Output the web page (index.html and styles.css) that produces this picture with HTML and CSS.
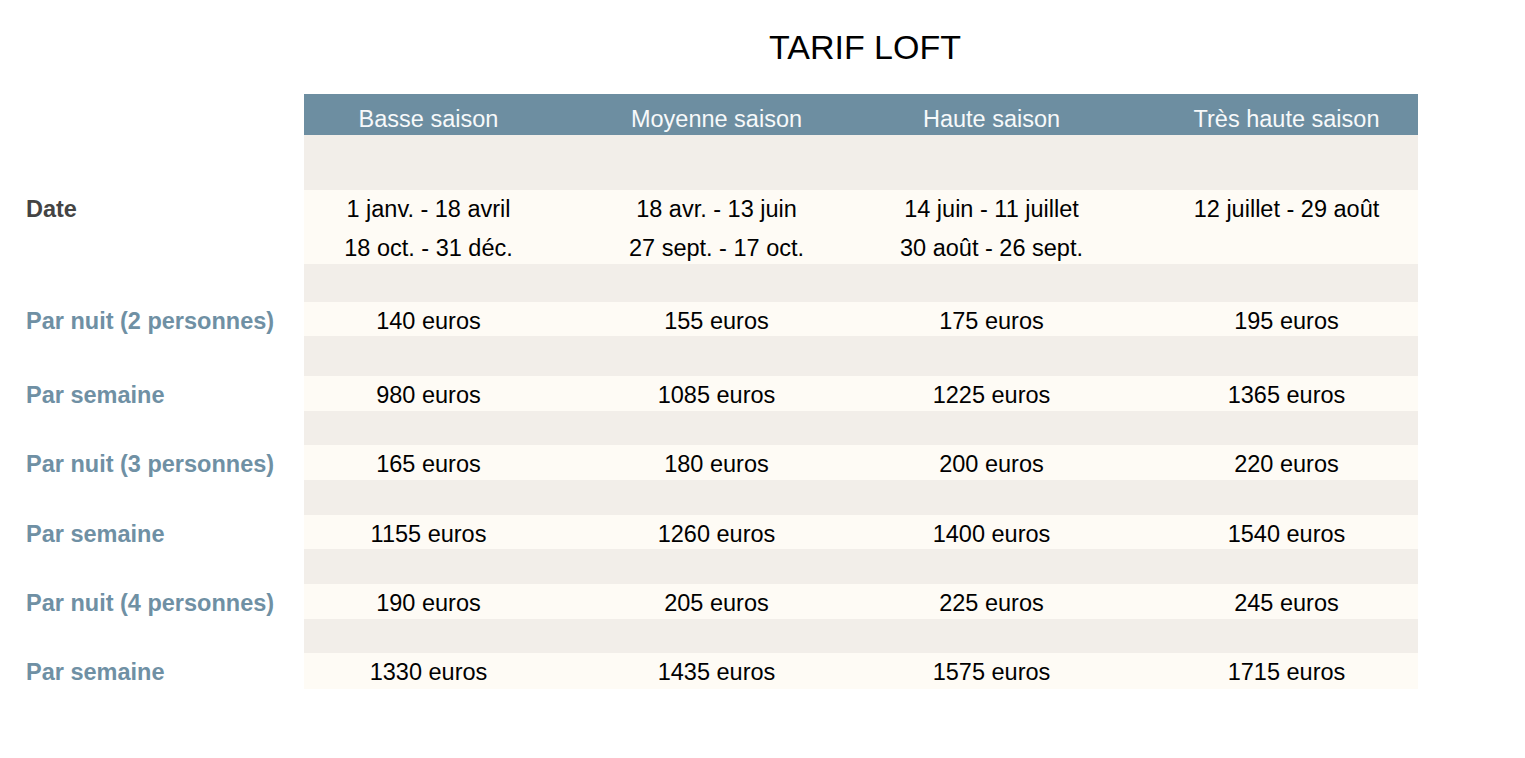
FILE: index.html
```html
<!DOCTYPE html>
<html lang="fr">
<head>
<meta charset="utf-8">
<title>Tarif Loft</title>
<link rel="stylesheet" href="styles.css">
</head>
<body>
<main class="page">
  <h1 class="title">TARIF LOFT</h1>
  <div class="tarifs">
    <div class="corner"></div>
    <div class="th">Basse saison</div>
    <div class="th">Moyenne saison</div>
    <div class="th">Haute saison</div>
    <div class="th last">Très haute saison</div>

    <div class="spacer"></div>

    <div class="label label-date">Date</div>
    <div class="td">1 janv. - 18 avril<br>18 oct. - 31 déc.</div>
    <div class="td">18 avr. - 13 juin<br>27 sept. - 17 oct.</div>
    <div class="td">14 juin - 11 juillet<br>30 août - 26 sept.</div>
    <div class="td last">12 juillet - 29 août</div>

    <div class="spacer"></div>

    <div class="label">Par nuit (2 personnes)</div>
    <div class="td">140 euros</div>
    <div class="td">155 euros</div>
    <div class="td">175 euros</div>
    <div class="td last">195 euros</div>

    <div class="spacer"></div>

    <div class="label">Par semaine</div>
    <div class="td">980 euros</div>
    <div class="td">1085 euros</div>
    <div class="td">1225 euros</div>
    <div class="td last">1365 euros</div>

    <div class="spacer"></div>

    <div class="label">Par nuit (3 personnes)</div>
    <div class="td">165 euros</div>
    <div class="td">180 euros</div>
    <div class="td">200 euros</div>
    <div class="td last">220 euros</div>

    <div class="spacer"></div>

    <div class="label">Par semaine</div>
    <div class="td">1155 euros</div>
    <div class="td">1260 euros</div>
    <div class="td">1400 euros</div>
    <div class="td last">1540 euros</div>

    <div class="spacer"></div>

    <div class="label">Par nuit (4 personnes)</div>
    <div class="td">190 euros</div>
    <div class="td">205 euros</div>
    <div class="td">225 euros</div>
    <div class="td last">245 euros</div>

    <div class="spacer"></div>

    <div class="label">Par semaine</div>
    <div class="td">1330 euros</div>
    <div class="td">1435 euros</div>
    <div class="td">1575 euros</div>
    <div class="td last">1715 euros</div>
  </div>
</main>
</body>
</html>
```

FILE: styles.css
```css
html, body {
  margin: 0;
  padding: 0;
  background: #ffffff;
}

body {
  font-family: "Liberation Sans", Arial, sans-serif;
  color: #000000;
}

.page {
  padding-top: 27px;
}

.title {
  margin: 0 0 27px 304px;
  width: 1114px;
  box-sizing: border-box;
  padding-left: 8px;
  font-size: 34px;
  font-weight: normal;
  line-height: 40px;
  text-align: center;
  color: #000000;
}

.tarifs {
  display: grid;
  grid-template-columns: 304px 249px 327px 223px 315px;
  grid-template-rows: 41px 55px 74px 38px 34px 40px 35px 34px 35px 35px 34px 35px 35px 34px 36px;
  font-size: 23.5px;
  line-height: 39px;
}

.th {
  background: #6d8ea1;
  color: #f7f9fa;
  text-align: center;
  padding-top: 6px;
  white-space: nowrap;
}

.spacer {
  grid-column: 2 / -1;
  background: #f2eee9;
}

.td {
  background: #fefbf5;
  text-align: center;
  white-space: nowrap;
}

.last {
  padding-left: 52px;
}

.label {
  padding-left: 26px;
  font-weight: bold;
  color: #6f90a4;
  white-space: nowrap;
}

.label-date {
  color: #444444;
}
```
